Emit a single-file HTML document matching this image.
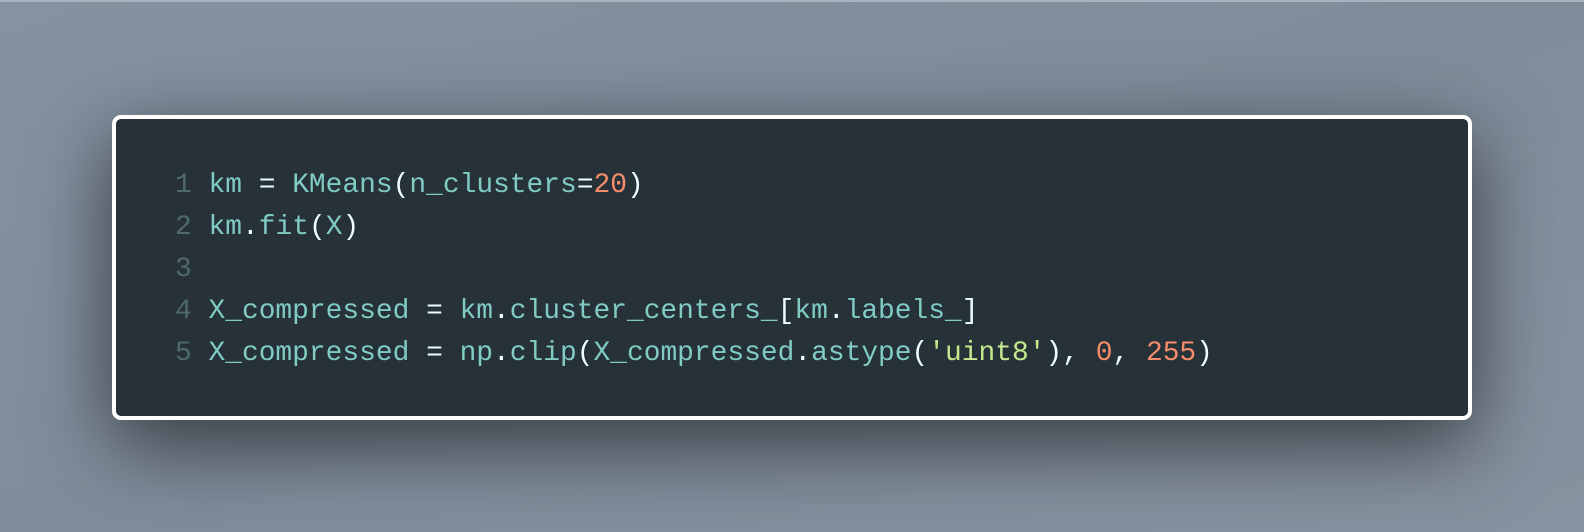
<!DOCTYPE html>
<html><head><meta charset="utf-8"><style>
html,body{margin:0;padding:0}
body{width:1584px;height:532px;overflow:hidden;position:relative;
background:linear-gradient(160deg,#8592a1 0%,#7f8c9a 50%,#86929f 100%);
border-top:2px solid #aab3bd;box-sizing:border-box}
.card{position:absolute;left:112px;top:113px;width:1352px;height:297px;
background:#263238;border:4px solid #fff;border-radius:9px;
box-shadow:0 24px 80px rgba(0,0,0,.6)}
pre{margin:0;position:absolute;left:59px;top:46px;
font-family:"Liberation Mono",monospace;font-size:27.9px;line-height:42px;color:#80cbc4}
.n{color:#4e6a6b}.p{color:#eeffff}.o{color:#f78c6c}.s{color:#c3e88d}
</style></head><body>
<div class="card"><pre><span class="n">1</span> km <span class="p">=</span> KMeans<span class="p">(</span>n_clusters<span class="p">=</span><span class="o">20</span><span class="p">)</span>
<span class="n">2</span> km<span class="p">.</span>fit<span class="p">(</span>X<span class="p">)</span>
<span class="n">3</span>
<span class="n">4</span> X_compressed <span class="p">=</span> km<span class="p">.</span>cluster_centers_<span class="p">[</span>km<span class="p">.</span>labels_<span class="p">]</span>
<span class="n">5</span> X_compressed <span class="p">=</span> np<span class="p">.</span>clip<span class="p">(</span>X_compressed<span class="p">.</span>astype<span class="p">(</span><span class="s">'uint8'</span><span class="p">),</span> <span class="o">0</span><span class="p">,</span> <span class="o">255</span><span class="p">)</span></pre></div>
</body></html>
